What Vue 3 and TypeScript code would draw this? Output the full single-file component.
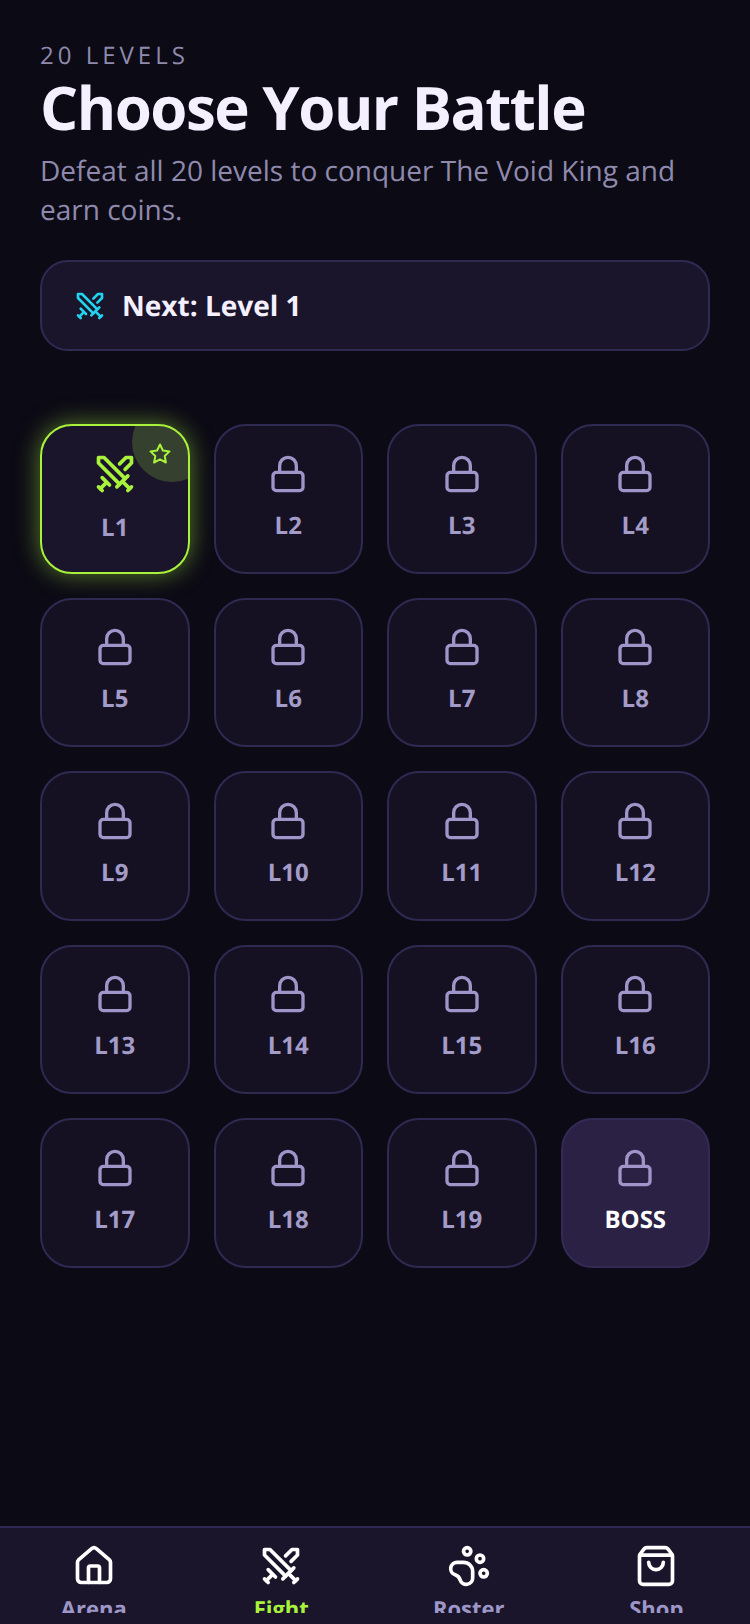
<script setup lang="ts">
const levels = Array.from({ length: 20 }, (_, i) => ({
  id: i + 1,
  label: i === 19 ? 'BOSS' : `L${i + 1}`,
  open: i === 0,
  boss: i === 19
}))

const tabs = [
  { name: 'Arena', icon: 'house' },
  { name: 'Fight', icon: 'swords', active: true },
  { name: 'Roster', icon: 'paw' },
  { name: 'Shop', icon: 'bag' }
]
</script>

<template>
  <div class="page">
    <main class="content">
      <div class="eyebrow">20 LEVELS</div>
      <h1 class="title">Choose Your Battle</h1>
      <p class="sub">Defeat all 20 levels to conquer The Void King and earn coins.</p>

      <div class="next">
        <svg class="nextIcon" viewBox="0 0 24 24">
          <polyline points="14.5 17.5 3 6 3 3 6 3 17.5 14.5" />
          <line x1="13" y1="19" x2="19" y2="13" />
          <line x1="16" y1="16" x2="20" y2="20" />
          <line x1="19" y1="21" x2="21" y2="19" />
          <polyline points="14.5 6.5 18 3 21 3 21 6 17.5 9.5" />
          <line x1="5" y1="14" x2="9" y2="18" />
          <line x1="7" y1="17" x2="4" y2="20" />
          <line x1="3" y1="19" x2="5" y2="21" />
        </svg>
        <span>Next: Level 1</span>
      </div>

      <div class="grid">
        <div
          v-for="lv in levels"
          :key="lv.id"
          class="tile"
          :class="{ open: lv.open, boss: lv.boss }"
        >
          <template v-if="lv.open">
            <div class="corner" />
            <svg class="star" viewBox="0 0 24 24">
              <path d="M12 2.5l2.9 6 6.6.9-4.8 4.6 1.2 6.5L12 17.4l-5.9 3.1 1.2-6.5L2.5 9.4l6.6-.9z" />
            </svg>
            <svg class="swords" viewBox="0 0 24 24">
              <polyline points="14.5 17.5 3 6 3 3 6 3 17.5 14.5" />
              <line x1="13" y1="19" x2="19" y2="13" />
              <line x1="16" y1="16" x2="20" y2="20" />
              <line x1="19" y1="21" x2="21" y2="19" />
              <polyline points="14.5 6.5 18 3 21 3 21 6 17.5 9.5" />
              <line x1="5" y1="14" x2="9" y2="18" />
              <line x1="7" y1="17" x2="4" y2="20" />
              <line x1="3" y1="19" x2="5" y2="21" />
            </svg>
          </template>
          <svg v-else class="lock" viewBox="0 0 24 24">
            <rect x="3" y="11" width="18" height="11" rx="2" ry="2" />
            <path d="M7 11V7a5 5 0 0 1 10 0v4" />
          </svg>
          <span class="tileLabel">{{ lv.label }}</span>
        </div>
      </div>
    </main>

    <nav class="tabbar">
      <div v-for="t in tabs" :key="t.name" class="tab" :class="{ active: t.active }">
        <svg class="tabIcon" viewBox="0 0 24 24">
          <template v-if="t.icon === 'house'">
            <path d="M15 21v-8a1 1 0 0 0-1-1h-4a1 1 0 0 0-1 1v8" />
            <path d="M3 10a2 2 0 0 1 .709-1.528l7-5.999a2 2 0 0 1 2.582 0l7 5.999A2 2 0 0 1 21 10v9a2 2 0 0 1-2 2H5a2 2 0 0 1-2-2z" />
          </template>
          <template v-else-if="t.icon === 'swords'">
            <polyline points="14.5 17.5 3 6 3 3 6 3 17.5 14.5" />
            <line x1="13" y1="19" x2="19" y2="13" />
            <line x1="16" y1="16" x2="20" y2="20" />
            <line x1="19" y1="21" x2="21" y2="19" />
            <polyline points="14.5 6.5 18 3 21 3 21 6 17.5 9.5" />
            <line x1="5" y1="14" x2="9" y2="18" />
            <line x1="7" y1="17" x2="4" y2="20" />
            <line x1="3" y1="19" x2="5" y2="21" />
          </template>
          <template v-else-if="t.icon === 'paw'">
            <circle cx="11" cy="4" r="2" />
            <circle cx="18" cy="8" r="2" />
            <circle cx="20" cy="16" r="2" />
            <path d="M9 10a5 5 0 0 1 5 5v3.5a3.5 3.5 0 0 1-6.84 1.045Q6.52 17.48 4.46 16.84A3.5 3.5 0 0 1 5.5 10Z" />
          </template>
          <template v-else>
            <path d="M16 10a4 4 0 0 1-8 0" />
            <path d="M3.103 6.034h17.794" />
            <path d="M3.4 5.467a2 2 0 0 0-.4 1.2V20a2 2 0 0 0 2 2h14a2 2 0 0 0 2-2V6.667a2 2 0 0 0-.4-1.2l-2.1-2.8A2 2 0 0 0 17 2H7a2 2 0 0 0-1.6.8z" />
          </template>
        </svg>
        <div class="tabClip">
          <span class="tabName">{{ t.name }}</span>
        </div>
      </div>
    </nav>
  </div>
</template>

<style>
html,
body {
  margin: 0;
  background: #0c0a15;
}
</style>

<style scoped>
.page {
  width: 750px;
  height: 1624px;
  display: flex;
  flex-direction: column;
  overflow: hidden;
  background: #0c0a15;
  font-family: 'Open Sans', 'Liberation Sans', sans-serif;
  text-rendering: geometricPrecision;
}

.content {
  flex: 1;
  padding: 39px 40px 0;
}

svg {
  fill: none;
  stroke: currentColor;
  stroke-width: 2;
  stroke-linecap: round;
  stroke-linejoin: round;
  display: block;
}

.eyebrow {
  font-size: 24px;
  letter-spacing: 4px;
  color: #8f8aad;
}

.title {
  margin: 2px 0 0;
  font-size: 60px;
  font-weight: 700;
  line-height: 66px;
  letter-spacing: -1.5px;
  color: #f5f0ff;
}

.sub {
  margin: 12px 0 0;
  font-size: 28px;
  line-height: 39.2px;
  color: #8f8aad;
}

.next {
  margin-top: 29.6px;
  height: 91px;
  box-sizing: border-box;
  display: flex;
  align-items: center;
  gap: 16px;
  padding: 0 32px;
  border: 2px solid #2f2a52;
  border-radius: 28px;
  background: #1a152b;
  font-size: 28px;
  font-weight: 700;
  color: #f5f0ff;
}

.nextIcon {
  width: 32px;
  height: 32px;
  color: #22d3ee;
}

.grid {
  margin-top: 73px;
  display: grid;
  grid-template-columns: repeat(4, 1fr);
  gap: 24px;
}

.tile {
  position: relative;
  aspect-ratio: 1;
  box-sizing: border-box;
  display: flex;
  flex-direction: column;
  align-items: center;
  justify-content: center;
  gap: 15px;
  padding-bottom: 2px;
  overflow: hidden;
  border: 2px solid #2f2a52;
  border-radius: 32px;
  background: #151122;
  color: #a39bc8;
}

.tile.open {
  border-color: #a8f23c;
  background: #1a152b;
  box-shadow: 0 0 24px rgba(168, 242, 60, 0.5);
}

.tile.boss {
  border-color: #332a55;
  background: #2b2145;
}

.corner {
  position: absolute;
  top: -24px;
  right: -24px;
  width: 80px;
  height: 80px;
  border-radius: 50%;
  background: rgba(168, 242, 60, 0.2);
}

.star {
  position: absolute;
  top: 16px;
  right: 16px;
  width: 24px;
  height: 24px;
  color: #a8f23c;
}

.swords {
  width: 44px;
  height: 44px;
  color: #a8f23c;
}

.lock {
  width: 40px;
  height: 40px;
  color: #9f95c8;
}

.tileLabel {
  font-size: 24px;
  font-weight: 700;
}

.boss .tileLabel {
  color: #fff;
}

.tabbar {
  height: 98px;
  box-sizing: border-box;
  display: grid;
  grid-template-columns: repeat(4, 1fr);
  padding-bottom: 11px;
  border-top: 2px solid #2f2a52;
  background: #1a152b;
}

.tab {
  display: flex;
  flex-direction: column;
  align-items: center;
  min-height: 0;
  padding-top: 16px;
  color: #9d97c8;
}

.tab.active {
  color: #a8f23c;
}

.tabIcon {
  flex: none;
  width: 44px;
  height: 44px;
  color: #fff;
}

.tabClip {
  flex: 1;
  min-height: 0;
  width: 100%;
  text-align: center;
  overflow: hidden;
  padding-top: 6px;
  box-sizing: border-box;
}

.tabName {
  font-size: 22px;
  font-weight: 700;
}
</style>
